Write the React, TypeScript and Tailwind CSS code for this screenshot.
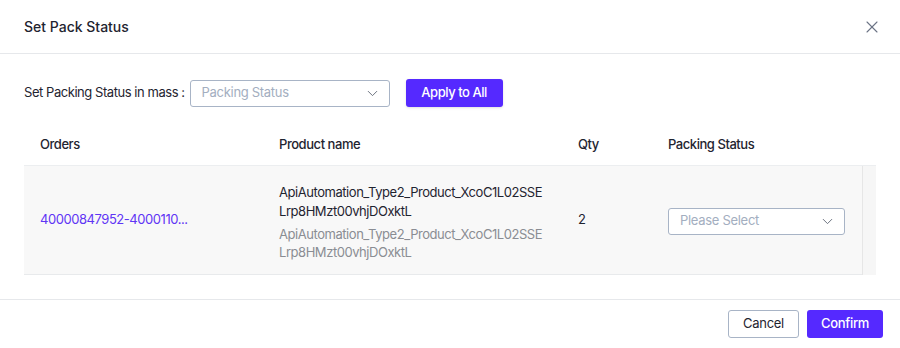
import { ChevronDown, X } from 'lucide-react';

function SelectBox({ placeholder, className }: { placeholder: string; className: string }) {
  return (
    <div
      className={`flex items-center justify-between rounded-[3px] border border-[#a8b4c6] bg-white pl-[11px] pr-[8px] ${className}`}
    >
      <span className="text-[13px] tracking-[-0.3px] text-[#a3aec0]">{placeholder}</span>
      <ChevronDown size={17} strokeWidth={1.4} className="text-[#6b7280]" />
    </div>
  );
}

export default function App() {
  return (
    <div className="w-[900px] h-[348px] bg-white text-[#1f2430] font-['Inter','Liberation_Sans',sans-serif] flex flex-col">
      <div className="h-[54px] flex items-center justify-between pl-[24px] pr-[18px] border-b border-[#e6e8eb]">
        <h1 className="text-[14px] font-medium text-[#1f2430]">Set Pack Status</h1>
        <X size={20} strokeWidth={1.3} className="text-[#6b7385]" />
      </div>

      <div className="px-[24px] flex-1 text-[13px] tracking-[-0.45px]">
        <div className="flex items-center mt-[25px] h-[28px]">
          <span className="text-[#1f2430]">Set Packing Status in mass :</span>
          <SelectBox placeholder="Packing Status" className="ml-[5px] w-[200px] h-[27px]" />
          <button className="ml-[16px] h-[28px] w-[97px] rounded-[3px] bg-[#5529ff] text-white font-medium shadow-sm">
            Apply to All
          </button>
        </div>

        <div className="mt-[18px]">
          <div className="flex h-[41px] items-center border-b border-[#eceef0] font-medium text-[#1f2430]">
            <div className="w-[255px] pl-[16px]">Orders</div>
            <div className="w-[299px]">Product name</div>
            <div className="w-[90px]">Qty</div>
            <div>Packing Status</div>
          </div>
          <div className="flex">
            <div className="flex flex-1 h-[109px] items-center bg-[#f8f8f8] border-b border-[#e8eaec]">
              <div className="w-[255px] pl-[16px] text-[#5f35f5]">40000847952-4000110...</div>
              <div className="w-[299px] leading-[19px] mt-[2px]">
                <div className="text-[#1f2430]">ApiAutomation_Type2_Product_XcoC1L02SSE</div>
                <div className="text-[#1f2430]">Lrp8HMzt00vhjDOxktL</div>
                <div className="text-[#8a8d93] mt-[4px]">ApiAutomation_Type2_Product_XcoC1L02SSE</div>
                <div className="text-[#8a8d93] leading-[16px]">Lrp8HMzt00vhjDOxktL</div>
              </div>
              <div className="w-[90px] mt-[-1px]">2</div>
              <SelectBox placeholder="Please Select" className="w-[177px] h-[27px] mt-[2px]" />
            </div>
            <div className="w-[14px] h-[109px] bg-[#f6f6f6] border-l border-[#e6e6e6]" />
          </div>
        </div>
      </div>

      <div className="h-[49px] border-t border-[#e6e8eb] flex items-start justify-end gap-[8px] pr-[17px] pt-[10px] text-[13px] tracking-[-0.3px]">
        <button className="h-[28px] w-[71px] rounded-[3px] border border-[#a8b4c6] bg-white text-[#1f2430]">
          Cancel
        </button>
        <button className="h-[28px] w-[76px] rounded-[3px] bg-[#5529ff] text-white font-medium">
          Confirm
        </button>
      </div>
    </div>
  );
}
